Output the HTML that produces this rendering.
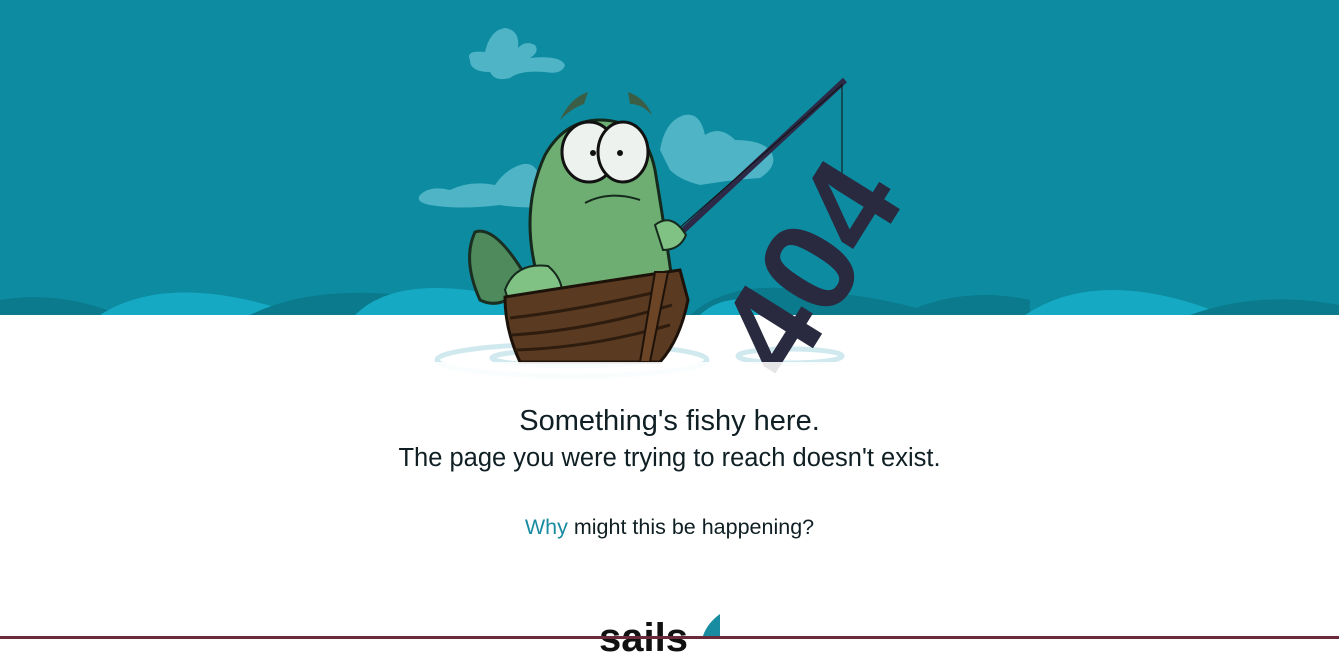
<!DOCTYPE html>
<html><head><meta charset="utf-8"><style>
html,body{margin:0;padding:0;width:1339px;height:639px;overflow:hidden;background:#fff;font-family:"Liberation Sans",sans-serif;color:#0f1f24}
.t{position:absolute;left:0;width:1339px;text-align:center;white-space:nowrap}
</style></head><body>
<svg width="1339" height="639" style="position:absolute;left:0;top:0">
<rect x="0" y="0" width="1339" height="315" fill="#0d8ca1"/>
<g fill="#4fb4c6">
<path d="M470 60 Q465 50 485 52 Q490 30 505 28 Q520 30 518 48 Q525 40 535 45 Q540 52 530 58 Q560 55 565 65 Q562 75 545 72 Q520 70 510 78 Q495 82 490 72 Q470 72 470 60Z"/>
<path d="M420 195 Q430 185 450 190 Q470 180 495 185 Q505 170 520 165 Q535 160 540 178 L560 205 Q530 210 500 205 Q460 210 430 205 Q415 202 420 195Z"/>
<path d="M660 150 Q665 120 685 115 Q700 112 705 135 Q720 125 735 140 Q760 140 770 150 Q780 165 760 178 Q730 180 700 185 Q680 180 670 170Z"/>
</g>
<path d="M0 315 L0 300 Q60 290 120 315Z" fill="#0a7a8c"/>
<path d="M100 315 Q170 270 300 315Z" fill="#15a9c3"/>
<path d="M250 315 Q320 280 440 300 L440 315Z" fill="#0a7a8c"/>
<path d="M355 315 Q400 270 520 300 L520 315Z" fill="#15a9c3"/>
<path d="M690 315 Q730 280 800 290 Q880 295 940 315Z" fill="#0a7a8c"/>
<path d="M700 315 Q720 295 760 300 L760 315Z" fill="#15a9c3"/>
<path d="M900 315 Q960 285 1030 300 L1030 315Z" fill="#0a7a8c"/>
<path d="M1025 315 Q1100 265 1225 315Z" fill="#15a9c3"/>
<path d="M1190 315 Q1260 290 1339 305 L1339 315Z" fill="#0a7a8c"/>
<g fill="none" stroke="#cfe9ef" stroke-width="5">
<ellipse cx="572" cy="360" rx="135" ry="16"/>
<ellipse cx="572" cy="358" rx="80" ry="8"/>
<ellipse cx="790" cy="356" rx="52" ry="7"/>
</g>
<path d="M560 120 Q570 98 588 92 L584 104 Q572 108 560 120Z" fill="#3a5e46"/>
<path d="M628 92 Q645 98 652 115 Q642 104 630 104Z" fill="#3a5e46"/>
<path d="M630 280 L845 80" stroke="#2c2a47" stroke-width="6"/>
<path d="M660 245 L842 85 L842 175" stroke="#111" stroke-width="1" fill="none"/>
<path d="M525 275 Q495 225 475 232 Q462 260 480 300 Q500 310 520 290Z" fill="#4f8a5c" stroke="#1a2e22" stroke-width="3"/>
<path d="M545 300 Q515 220 545 155 Q565 120 600 120 Q645 120 655 170 Q665 230 672 280 L640 300Z" fill="#6fae72" stroke="#15291d" stroke-width="3"/>
<path d="M505 290 Q515 262 548 266 Q565 280 562 302 L510 305Z" fill="#80c184" stroke="#15291d" stroke-width="2"/>
<path d="M655 225 Q672 212 686 235 Q680 250 663 250Z" fill="#80c184" stroke="#15291d" stroke-width="2"/>
<ellipse cx="589" cy="152" rx="27" ry="30" fill="#eef2ee" stroke="#111" stroke-width="3"/>
<ellipse cx="623" cy="152" rx="25" ry="30" fill="#eef2ee" stroke="#111" stroke-width="3"/>
<circle cx="593" cy="153" r="3" fill="#111"/><circle cx="620" cy="153" r="3" fill="#111"/>
<path d="M585 203 Q610 190 640 200" stroke="#15291d" stroke-width="2" fill="none"/>
<path d="M505 297 Q580 285 680 270 L688 300 Q680 340 660 362 L520 362 Q505 330 505 297Z" fill="#5a3a20" stroke="#1d120a" stroke-width="3"/>
<g stroke="#2e1c0e" stroke-width="3" fill="none">
<path d="M510 318 Q580 310 665 290"/><path d="M512 335 Q590 330 672 305"/><path d="M515 350 Q590 348 670 325"/>
</g>
<path d="M655 272 L640 362 L650 362 L668 272Z" fill="#6b4526" stroke="#1d120a" stroke-width="2"/>
<text x="0" y="0" transform="translate(790,385) rotate(-58)" font-family="Liberation Sans" font-weight="bold" font-size="132" fill="#292a40">404</text>
<rect x="430" y="362" width="500" height="40" fill="#fff" opacity="0.88"/>
</svg>
<div class="t" style="top:405px;font-size:29px">Something's fishy here.</div>
<div class="t" style="top:444px;font-size:25.5px">The page you were trying to reach doesn't exist.</div>
<div class="t" style="top:515px;font-size:21.5px"><span style="color:#1a8ca1">Why</span> might this be happening?</div>
<div class="t" style="top:616px;font-size:40px;font-weight:bold;color:#111;left:-26px">sails</div>
<svg width="30" height="30" style="position:absolute;left:698px;top:614px"><path d="M22 0 Q8 10 4 25 L22 25Z" fill="#1a8ca1"/></svg>
<div style="position:absolute;left:0;top:636px;width:1339px;height:3px;background:#6a2a3a"></div>
</body></html>
